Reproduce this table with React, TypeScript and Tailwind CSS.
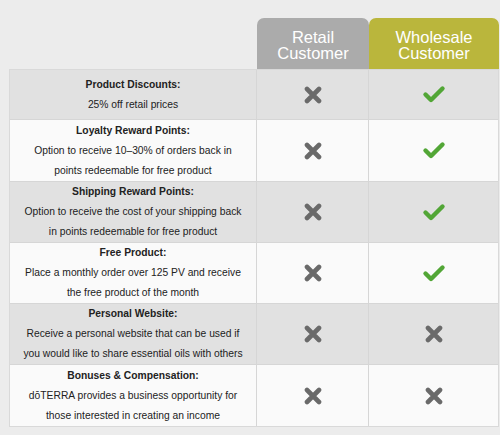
const rows = [
  { title: 'Product Discounts:', lines: ['25% off retail prices'], retail: false, wholesale: true, h: 'h-[50px]' },
  { title: 'Loyalty Reward Points:', lines: ['Option to receive 10–30% of orders back in', 'points redeemable for free product'], retail: false, wholesale: true, h: 'h-[62px]' },
  { title: 'Shipping Reward Points:', lines: ['Option to receive the cost of your shipping back', 'in points redeemable for free product'], retail: false, wholesale: true, h: 'h-[61px]' },
  { title: 'Free Product:', lines: ['Place a monthly order over 125 PV and receive', 'the free product of the month'], retail: false, wholesale: true, h: 'h-[61px]' },
  { title: 'Personal Website:', lines: ['Receive a personal website that can be used if', 'you would like to share essential oils with others'], retail: false, wholesale: false, h: 'h-[61px]' },
  { title: 'Bonuses & Compensation:', lines: ['dōTERRA provides a business opportunity for', 'those interested in creating an income'], retail: false, wholesale: false, h: 'h-[61px]' },
]

function Cross() {
  return (
    <svg width="20" height="18" viewBox="0 0 20 18">
      <path d="M4 3 L16 15 M16 3 L4 15" stroke="#6a6a6a" strokeWidth="4.6" strokeLinecap="round" />
    </svg>
  )
}

function Check() {
  return (
    <svg width="24" height="19" viewBox="0 0 24 19">
      <path d="M3.5 9.5 L9 15 L20.5 3.5" stroke="#52a636" strokeWidth="4.4" strokeLinecap="round" strokeLinejoin="round" fill="none" />
    </svg>
  )
}

function Mark({ ok }: { ok: boolean }) {
  return ok ? <Check /> : <Cross />
}

export default function App() {
  return (
    <div className="h-[435px] w-[500px] bg-[#ececec] pt-[18px] pl-[9px] font-['Liberation_Sans',Arial,sans-serif]">
      <div className="flex">
        <div className="w-[248px]" />
        <div className="flex h-[51px] w-[112px] flex-col items-center justify-center rounded-t-[7px] bg-[#ababab] pt-[2px] text-[16.5px] leading-[16px] text-white">
          <span>Retail</span>
          <span>Customer</span>
        </div>
        <div className="flex h-[51px] w-[130px] flex-col items-center justify-center rounded-t-[7px] bg-[#bab63c] pt-[2px] text-[16.5px] leading-[16px] text-white">
          <span>Wholesale</span>
          <span>Customer</span>
        </div>
      </div>
      <div className="w-[490px] border border-[#d9d9d9]">
        {rows.map((r, i) => (
          <div
            key={r.title}
            className={`grid grid-cols-[247px_112px_129px] ${r.h} ${i % 2 === 0 ? 'bg-[#e1e1e1]' : 'bg-[#fafafa]'} ${i < rows.length - 1 ? 'border-b border-[#d6d6d6]' : ''}`}
          >
            <div className="flex flex-col items-center justify-center border-r border-[#d6d6d6] text-center text-[10.3px] leading-[20px] text-[#222]">
              <span className="font-bold">{r.title}</span>
              {r.lines.map((l) => (
                <span key={l}>{l}</span>
              ))}
            </div>
            <div className="flex items-center justify-center border-r border-[#d6d6d6]">
              <Mark ok={r.retail} />
            </div>
            <div className="flex items-center justify-center">
              <Mark ok={r.wholesale} />
            </div>
          </div>
        ))}
      </div>
    </div>
  )
}
